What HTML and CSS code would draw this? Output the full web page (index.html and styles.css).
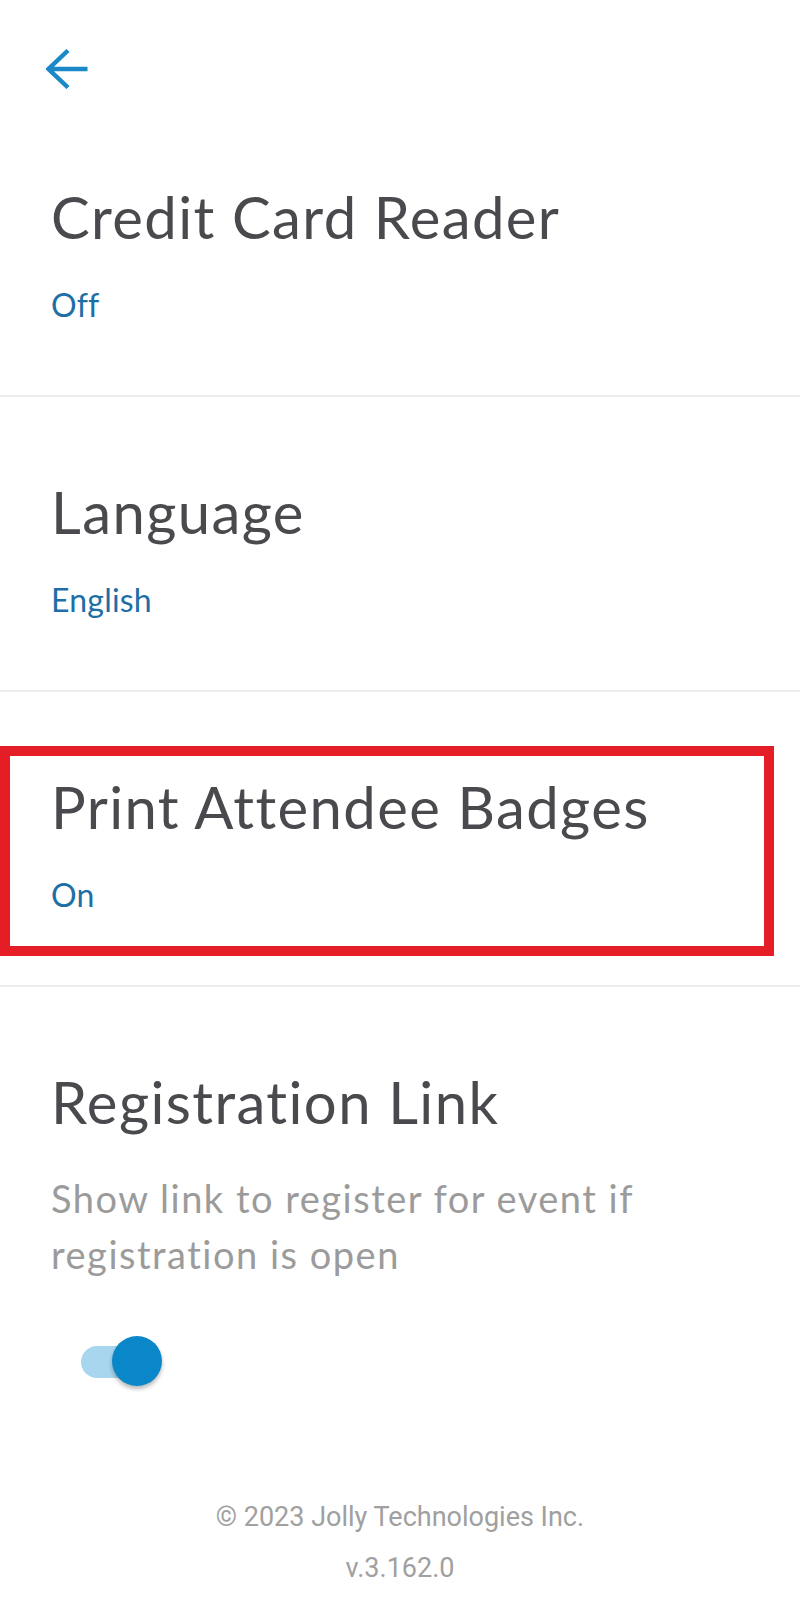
FILE: index.html
```html
<!DOCTYPE html>
<html lang="en">
<head>
<meta charset="utf-8">
<title>Settings</title>
<link rel="stylesheet" href="styles.css">
</head>
<body>
<div class="page">
  <header class="header">
    <svg class="back" width="44" height="40" viewBox="0 0 44 40" aria-label="Back">
      <path d="M2.5 20 H41.5 M22 1.5 L2.5 20 L22 38.5" fill="none" stroke="#1b88c7" stroke-width="4.4" stroke-linejoin="miter" stroke-linecap="butt"/>
    </svg>
  </header>

  <section class="setting">
    <h2 class="title">Credit Card Reader</h2>
    <div class="value">Off</div>
  </section>

  <section class="setting">
    <h2 class="title">Language</h2>
    <div class="value">English</div>
  </section>

  <section class="setting highlighted">
    <div class="highlight-box"></div>
    <h2 class="title">Print Attendee Badges</h2>
    <div class="value">On</div>
  </section>

  <section class="setting last">
    <h2 class="title">Registration Link</h2>
    <p class="desc">Show link to register for event if registration is open</p>
    <div class="switch">
      <div class="track"></div>
      <div class="thumb"></div>
    </div>
  </section>

  <footer class="footer">
    <div>© 2023 Jolly Technologies Inc.</div>
    <div>v.3.162.0</div>
  </footer>
</div>
</body>
</html>
```

FILE: styles.css
```css
html, body {
  margin: 0;
  padding: 0;
  background: #ffffff;
}

.page {
  width: 800px;
  font-family: "Lato", "Noto Sans", sans-serif;
}

.header {
  height: 102px;
  box-sizing: border-box;
  padding: 49px 0 0 46px;
}

.back {
  display: block;
}

.setting {
  position: relative;
  padding: 80px 30px 70px 51px;
  border-bottom: 2px solid #ececec;
}

.setting.last {
  border-bottom: none;
  padding-bottom: 0;
}

.title {
  margin: 0;
  font-size: 58px;
  line-height: 70px;
  font-weight: 400;
  color: #4a4a4e;
  letter-spacing: 1.4px;
}

.value {
  margin-top: 33px;
  font-size: 32px;
  line-height: 40px;
  color: #1d6fa6;
  letter-spacing: 0.2px;
}

.highlight-box {
  position: absolute;
  left: 0;
  top: 54px;
  width: 774px;
  height: 210px;
  box-sizing: border-box;
  border: 10px solid #e41d27;
}

.desc {
  margin: 33px 0 0 0;
  font-size: 38px;
  line-height: 56px;
  color: #9b9b9b;
  letter-spacing: 1.5px;
  max-width: 640px;
}

.switch {
  position: relative;
  margin: 54px 0 0 30px;
  width: 82px;
  height: 50px;
}

.track {
  position: absolute;
  left: 0;
  top: 10px;
  width: 72px;
  height: 32px;
  border-radius: 16px;
  background: #a8d6ee;
}

.thumb {
  position: absolute;
  left: 31px;
  top: 0;
  width: 50px;
  height: 50px;
  border-radius: 50%;
  background: #0a87c8;
  box-shadow: 0 3px 4px rgba(0, 0, 0, 0.28);
}

.footer {
  margin-top: 106px;
  text-align: center;
  font-family: "Roboto", "Liberation Sans", sans-serif;
  font-size: 27px;
  line-height: 51px;
  color: #a0a0a0;
}
```
